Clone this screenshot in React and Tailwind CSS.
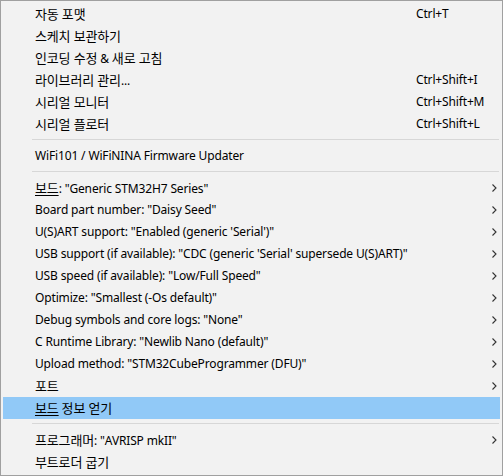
import React from 'react';

const items = [
    { label: '자동 포맷', shortcut: 'Ctrl+T' },
    { label: '스케치 보관하기' },
    { label: '인코딩 수정 & 새로 고침' },
    { label: '라이브러리 관리...', shortcut: 'Ctrl+Shift+I' },
    { label: '시리얼 모니터', shortcut: 'Ctrl+Shift+M' },
    { label: '시리얼 플로터', shortcut: 'Ctrl+Shift+L' },
    { sep: true },
    { label: 'WiFi101 / WiFiNINA Firmware Updater' },
    { sep: true },
    { label: ': "Generic STM32H7 Series"', mnemonic: '보드', sub: true },
    { label: 'Board part number: "Daisy Seed"', sub: true },
    { label: 'U(S)ART support: "Enabled (generic \'Serial\')"', sub: true },
    { label: 'USB support (if available): "CDC (generic \'Serial\' supersede U(S)ART)"', sub: true },
    { label: 'USB speed (if available): "Low/Full Speed"', sub: true },
    { label: 'Optimize: "Smallest (-Os default)"', sub: true },
    { label: 'Debug symbols and core logs: "None"', sub: true },
    { label: 'C Runtime Library: "Newlib Nano (default)"', sub: true },
    { label: 'Upload method: "STM32CubeProgrammer (DFU)"', sub: true },
    { label: '포트', sub: true },
    { label: ' 정보 얻기', mnemonic: '보드', active: true },
    { sep: true },
    { label: '프로그래머: "AVRISP mkII"', sub: true },
    { label: '부트로더 굽기' },
];

// Hangul runs get a slightly larger size, like Malgun Gothic next to Segoe UI
const Mixed = ({ text }) =>
    text.split(/([\uac00-\ud7a3]+(?: [\uac00-\ud7a3]+)*)/).map((part, i) =>
        /[\uac00-\ud7a3]/.test(part) ? (
            <span key={i} className="text-[13px]">{part}</span>
        ) : (
            <span key={i}>{part}</span>
        )
    );

const Chevron = () => (
    <svg width="5" height="8" viewBox="0 0 5 8" className="text-[#333]">
        <path d="M0.5 0.5 L4 4 L0.5 7.5" fill="none" stroke="currentColor" strokeWidth="1.1" />
    </svg>
);

export default function App() {
    return (
        <div
            className="w-[503px] h-[476px] bg-[#f2f2f2] border border-[#a0a0a0] pt-[2px] px-[2px] text-[12px] text-[#000] tracking-[-0.15px] overflow-hidden"
            style={{ fontFamily: '"Segoe UI", "Noto Sans", "Noto Sans CJK KR", sans-serif' }}
        >
            {items.map((it, i) => {
                if (it.sep) {
                    return (
                        <div key={i} className="h-[10px] pt-[4px] pl-[29px] pr-[1px]">
                            <div className="h-px w-full bg-[#d7d7d7]" />
                        </div>
                    );
                }
                return (
                    <div
                        key={i}
                        className={`h-[22px] flex items-center pl-[32px] pr-[3px] ${it.active ? 'bg-[#91c9f7]' : ''}`}
                    >
                        <span className="flex-1 whitespace-pre leading-none">
                            {it.mnemonic && (
                                <span className="underline underline-offset-2 text-[13px]">{it.mnemonic}</span>
                            )}
                            <Mixed text={it.label} />
                        </span>
                        {it.shortcut && <span className="w-[81px] leading-none">{it.shortcut}</span>}
                        {it.sub && (
                            <span className="w-[8px] flex justify-end">
                                <Chevron />
                            </span>
                        )}
                    </div>
                );
            })}
        </div>
    );
}
